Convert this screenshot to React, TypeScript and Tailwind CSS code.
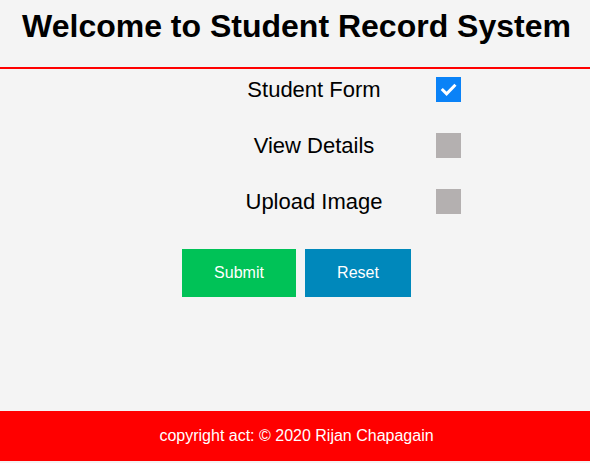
import React from "react";

function Box({ checked }: { checked?: boolean }) {
  return checked ? (
    <div className="w-[25px] h-[25px] bg-[#0a82f7] shrink-0">
      <svg width="25" height="25" viewBox="0 0 25 25">
        <path d="M6.8 13 L10.6 16.8 L18.4 8.8" fill="none" stroke="#ffffff" strokeWidth="3" strokeLinecap="square" />
      </svg>
    </div>
  ) : (
    <div className="w-[25px] h-[25px] bg-[#b4b0b0] shrink-0" />
  );
}

export default function App() {
  const rows = [
    { label: "Student Form", checked: true },
    { label: "View Details", checked: false },
    { label: "Upload Image", checked: false },
  ];
  return (
    <div className="h-[463px] w-[590px] bg-[#f4f4f4] flex flex-col text-black" style={{ fontFamily: '"Liberation Sans", Arial, sans-serif' }}>
      <header className="h-[69px] border-b-2 border-[#ff0000] flex justify-center pl-[3px]">
        <h1 className="mt-[8px] text-[32px] leading-[37px] font-bold">Welcome to Student Record System</h1>
      </header>
      <main className="flex-1 flex flex-col pt-[8px]">
        <div className="flex flex-col gap-[31px]">
          {rows.map((r) => (
            <div key={r.label} className="flex items-center h-[25px] pl-[214px]">
              <span className="w-[200px] text-center text-[22px] leading-[25px]">{r.label}</span>
              <div className="ml-[22px]">
                <Box checked={r.checked} />
              </div>
            </div>
          ))}
        </div>
        <div className="flex justify-center gap-[9px] mt-[35px] pl-[3px]">
          <button className="w-[114px] h-[48px] bg-[#00c257] text-white text-[16px]">Submit</button>
          <button className="w-[106px] h-[48px] bg-[#0088bb] text-white text-[16px]">Reset</button>
        </div>
      </main>
      <footer className="h-[50px] mb-[2px] pl-[3px] bg-[#ff0000] text-white text-[16px] flex items-center justify-center">
        copyright act: © 2020 Rijan Chapagain
      </footer>
    </div>
  );
}
